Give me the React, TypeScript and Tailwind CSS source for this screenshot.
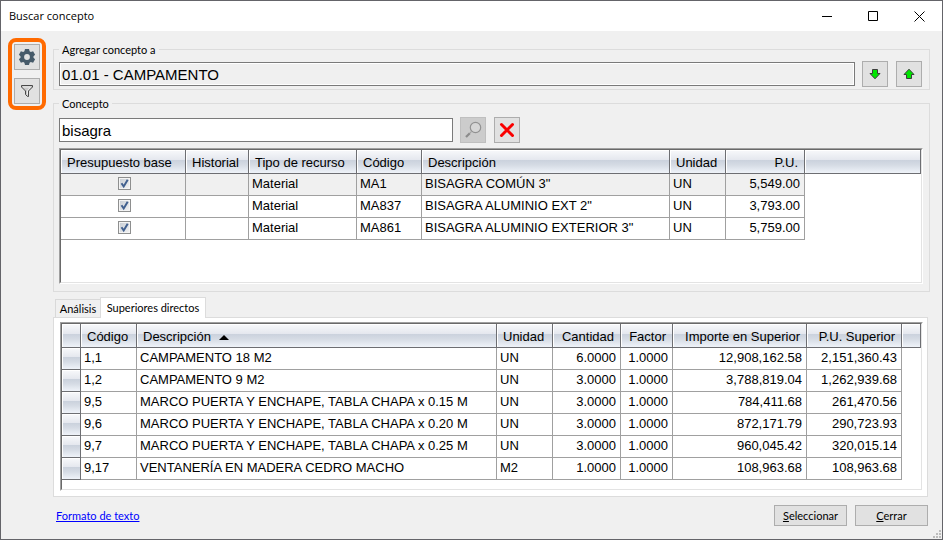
import { useState } from "react";
import type { ReactNode } from "react";
import clsx from "clsx";

type Column = {
  label: string;
  width: string;
  numeric?: boolean;
  sorted?: boolean;
};

const resourceColumns: Column[] = [
  { label: "Presupuesto base", width: "w-[125px]" },
  { label: "Historial", width: "w-[63px]" },
  { label: "Tipo de recurso", width: "w-[108px]" },
  { label: "Código", width: "w-[65px]" },
  { label: "Descripción", width: "w-[248px]" },
  { label: "Unidad", width: "w-[56px]" },
  { label: "P.U.", width: "w-[79px]", numeric: true },
];

const resources = [
  { type: "Material", code: "MA1", name: 'BISAGRA COMÚN 3"', unit: "UN", price: "5,549.00" },
  { type: "Material", code: "MA837", name: 'BISAGRA ALUMINIO EXT 2"', unit: "UN", price: "3,793.00" },
  { type: "Material", code: "MA861", name: 'BISAGRA ALUMINIO EXTERIOR 3"', unit: "UN", price: "5,759.00" },
];

const parentColumns: Column[] = [
  { label: "", width: "w-[19px]" },
  { label: "Código", width: "w-[56px]" },
  { label: "Descripción", width: "w-[360px]", sorted: true },
  { label: "Unidad", width: "w-[56px]" },
  { label: "Cantidad", width: "w-[68px]", numeric: true },
  { label: "Factor", width: "w-[52px]", numeric: true },
  { label: "Importe en Superior", width: "w-[134px]", numeric: true },
  { label: "P.U. Superior", width: "w-[95px]", numeric: true },
];

const parents = [
  ["1,1", "CAMPAMENTO 18 M2", "UN", "6.0000", "1.0000", "12,908,162.58", "2,151,360.43"],
  ["1,2", "CAMPAMENTO 9 M2", "UN", "3.0000", "1.0000", "3,788,819.04", "1,262,939.68"],
  ["9,5", "MARCO PUERTA Y ENCHAPE, TABLA CHAPA x 0.15 M", "UN", "3.0000", "1.0000", "784,411.68", "261,470.56"],
  ["9,6", "MARCO PUERTA Y ENCHAPE, TABLA CHAPA x 0.20 M", "UN", "3.0000", "1.0000", "872,171.79", "290,723.93"],
  ["9,7", "MARCO PUERTA Y ENCHAPE, TABLA CHAPA x 0.25 M", "UN", "3.0000", "1.0000", "960,045.42", "320,015.14"],
  ["9,17", "VENTANERÍA EN MADERA CEDRO MACHO", "M2", "1.0000", "1.0000", "108,963.68", "108,963.68"],
];

const headerFill =
  "bg-[linear-gradient(to_bottom,#f8f9fb_0%,#e4e7ee_44%,#cbd2dd_45%,#d5dbe4_65%,#eff3f9_100%)]";

function ToolButton({
  label,
  disabled,
  children,
}: {
  label: string;
  disabled?: boolean;
  children: ReactNode;
}) {
  return (
    <button
      type="button"
      aria-label={label}
      disabled={disabled}
      className={clsx(
        "flex size-[26px] shrink-0 items-center justify-center border",
        disabled ? "border-[#bfbfbf] bg-[#cccccc]" : "border-[#adadad] bg-[#e1e1e1]"
      )}
    >
      {children}
    </button>
  );
}

function GearIcon() {
  return (
    <svg width="18" height="18" viewBox="0 0 18 18" fill="#465a69">
      <path
        fillRule="evenodd"
        d="M7 1h4l.6 2.200 1.200.7 2.300-.6 2 3.400-1.600 1.600v1.400l1.600 1.600-2 3.400-2.300-.6-1.200.7L11 17H7l-.6-2.200-1.200-.7-2.300.6-2-3.400 1.600-1.600V8.300L.9 6.700l2-3.400 2.300.6 1.200-.7zM9 6.100a2.900 2.900 0 1 0 0 5.800 2.900 2.900 0 0 0 0-5.800z"
      />
    </svg>
  );
}

function FunnelIcon() {
  return (
    <svg width="14" height="14" viewBox="0 0 14 14" fill="#c8c8c8" stroke="#484848" strokeWidth="1">
      <path d="M1.500 1.500h11v1.500l-4 4v5.500h-1l-2-2v-3.500l-4-4z" />
      <path d="M3 3h7.500L7.500 6.500v4" fill="none" stroke="#eeeeee" />
    </svg>
  );
}

function ArrowIcon({ up }: { up?: boolean }) {
  return (
    <svg width="12" height="12" viewBox="0 0 12 12" fill="#00e600" stroke="#3c3c3c" strokeWidth="1">
      {up ? (
        <path d="M6 1.200 11 6.500H8.500v4h-5v-4H1z" />
      ) : (
        <path d="M6 10.800 1 5.500h2.500v-4h5v4H11z" />
      )}
    </svg>
  );
}

function SearchIcon() {
  return (
    <svg width="18" height="18" viewBox="0 0 18 18" fill="none">
      <circle cx="11.500" cy="6.500" r="5.200" fill="#d6d6d6" stroke="#929292" strokeWidth="1.200" />
      <path d="M7.800 10.200 6 12" stroke="#a5a5a5" strokeWidth="1.200" />
      <path d="M5.800 12.200 2 16" stroke="#8b8b8b" strokeWidth="2.200" />
    </svg>
  );
}

function DeleteIcon() {
  return (
    <svg width="16" height="16" viewBox="0 0 16 16" stroke="#fa0000" strokeWidth="3" strokeLinecap="round">
      <path d="M2.500 2.500 13.500 13.500M13.500 2.500 2.500 13.500" />
    </svg>
  );
}

// Sunken two-line frame around each grid
function GridFrame({ className, children }: { className: string; children: ReactNode }) {
  return (
    <div className="border border-t-[#a0a0a0] border-l-[#a0a0a0] border-r-white border-b-white">
      <div
        className={clsx(
          "overflow-hidden border border-t-[#696969] border-l-[#696969] border-r-[#e3e3e3] border-b-[#e3e3e3] bg-white",
          className
        )}
      >
        {children}
      </div>
    </div>
  );
}

function GridHead({ columns }: { columns: Column[] }) {
  return (
    <thead>
      <tr>
        {columns.map((column) => (
          <th
            key={column.label}
            scope="col"
            className={clsx(
              "h-6 border-r border-b border-[#6d6e72] px-[6px] pt-[2px] font-normal shadow-[inset_1px_1px_0_#fff]",
              headerFill,
              column.width,
              column.numeric ? "text-right" : "text-left"
            )}
          >
            {column.label}
            {column.sorted && (
              <svg width="10" height="5" viewBox="0 0 10 5" className="ml-2 inline align-middle">
                <path d="M5 0 10 5H0z" />
              </svg>
            )}
          </th>
        ))}
        <td
          className={clsx(
            "h-6 border-r border-b border-[#6d6e72] shadow-[inset_1px_1px_0_#fff]",
            headerFill
          )}
        />
      </tr>
    </thead>
  );
}

function Cell({ numeric, children }: { numeric?: boolean; children?: ReactNode }) {
  return (
    <td
      className={clsx(
        "h-[22px] border-r border-b border-[#a0a0a0] pb-[2px]",
        numeric ? "pr-1 text-right" : "pl-[3px]"
      )}
    >
      {children}
    </td>
  );
}

function CheckBox({ label }: { label: string }) {
  return (
    <span className="relative mx-auto block size-[13px]">
      <input
        type="checkbox"
        defaultChecked
        aria-label={label}
        className="peer block size-[13px] appearance-none border border-[#8e8f8f] bg-linear-to-br from-[#c6ccd4] to-[#f4f4f4] shadow-[inset_0_0_0_1px_#f4f4f4]"
      />
      <svg
        width="13"
        height="13"
        viewBox="0 0 13 13"
        fill="none"
        stroke="#41608f"
        strokeWidth="2"
        className="pointer-events-none absolute inset-0 hidden peer-checked:block"
      >
        <path d="M3.500 6.200 5.700 9.500 9.700 2.800" />
      </svg>
    </span>
  );
}

function TitleBar() {
  return (
    <header className="flex h-[30px] items-center bg-white">
      <h1 className="flex-1 pl-2 font-['Open_Sans','Noto_Sans',sans-serif] text-[11px]">
        Buscar concepto
      </h1>
      <button type="button" aria-label="Minimizar" className="flex h-full w-[46px] items-center justify-center">
        <svg width="11" height="11" stroke="#000">
          <path d="M0 5.500h10" />
        </svg>
      </button>
      <button type="button" aria-label="Maximizar" className="flex h-full w-[46px] items-center justify-center">
        <svg width="11" height="11" fill="none" stroke="#000">
          <path d="M.5 .5h9v9h-9z" />
        </svg>
      </button>
      <button type="button" aria-label="Cerrar ventana" className="flex h-full w-[46px] items-center justify-center">
        <svg width="11" height="11" stroke="#000">
          <path d="M.5 .5l10 10M10.500 .5l-10 10" />
        </svg>
      </button>
    </header>
  );
}

function TargetGroup() {
  return (
    <fieldset className="border border-[#dcdcdc] px-[5px] pt-[5px] pb-[2px]">
      <legend className="px-[3px] leading-[13px]">
        <label htmlFor="target">Agregar concepto a</label>
      </legend>
      <div className="flex items-center pr-[2px]">
        <input
          id="target"
          readOnly
          defaultValue="01.01 - CAMPAMENTO"
          className="mr-[7px] h-6 min-w-0 flex-1 border border-[#7a7a7a] bg-[#f0f0f0] px-[2px] font-['Liberation_Sans',sans-serif] text-[15px] shadow-[inset_0_0_0_1px_#fff]"
        />
        <div className="flex gap-2">
          <ToolButton label="Siguiente">
            <ArrowIcon />
          </ToolButton>
          <ToolButton label="Anterior">
            <ArrowIcon up />
          </ToolButton>
        </div>
      </div>
    </fieldset>
  );
}

function ConceptGroup() {
  const [query, setQuery] = useState("bisagra");

  return (
    <fieldset className="mt-[7px] border border-[#dcdcdc] px-[5px] pt-[7px] pb-[7px]">
      <legend className="px-[3px] leading-[13px]">
        <label htmlFor="query">Concepto</label>
      </legend>
      <div className="mb-[5px] flex items-center">
        <input
          id="query"
          value={query}
          onChange={(event) => setQuery(event.target.value)}
          className="mr-[7px] h-6 w-[394px] border border-[#7a7a7a] bg-white px-[2px] font-['Liberation_Sans',sans-serif] text-[15px]"
        />
        <div className="flex gap-2">
          <ToolButton label="Buscar" disabled>
            <SearchIcon />
          </ToolButton>
          <ToolButton label="Limpiar">
            <DeleteIcon />
          </ToolButton>
        </div>
      </div>
      <div className="pr-[1px]">
        <GridFrame className="min-h-[134px]">
          <table className="w-full table-fixed border-separate border-spacing-0 font-['Liberation_Sans',sans-serif] text-[13px] leading-4 whitespace-nowrap">
            <GridHead columns={resourceColumns} />
            <tbody>
              {resources.map((item, index) => (
                <tr key={item.code} className={index === 0 ? "*:bg-[#f0f0f0]" : ""}>
                  <Cell>
                    <CheckBox label={item.name} />
                  </Cell>
                  <Cell />
                  <Cell>{item.type}</Cell>
                  <Cell>{item.code}</Cell>
                  <Cell>{item.name}</Cell>
                  <Cell>{item.unit}</Cell>
                  <Cell numeric>{item.price}</Cell>
                </tr>
              ))}
            </tbody>
          </table>
        </GridFrame>
      </div>
    </fieldset>
  );
}

function ParentsPanel() {
  return (
    <section className="mt-[5px] mr-[2px]">
      <div role="tablist" className="flex items-end pl-[2px]">
        <button
          type="button"
          role="tab"
          aria-selected="false"
          className="h-[18px] w-[45px] border border-r-0 border-b-0 border-[#d9d9d9] bg-[#f0f0f0]"
        >
          Análisis
        </button>
        <button
          type="button"
          role="tab"
          aria-selected="true"
          className="relative -mb-px h-[21px] w-[106px] border border-b-0 border-[#dcdcdc] bg-white"
        >
          Superiores directos
        </button>
      </div>
      <div role="tabpanel" className="border border-[#dcdcdc] bg-white pt-1 pr-1 pb-[5px] pl-[6px]">
        <GridFrame className="min-h-[167px]">
          <table className="w-full table-fixed border-separate border-spacing-0 font-['Liberation_Sans',sans-serif] text-[13px] leading-4 whitespace-nowrap">
            <GridHead columns={parentColumns} />
            <tbody>
              {parents.map((row) => (
                <tr key={row[0]}>
                  <td
                    className={clsx(
                      "h-[22px] border-r border-b border-[#6d6e72] shadow-[inset_1px_1px_0_#fff]",
                      headerFill
                    )}
                  />
                  {row.map((value, index) => (
                    <Cell key={index} numeric={index > 2}>
                      {value}
                    </Cell>
                  ))}
                </tr>
              ))}
            </tbody>
          </table>
        </GridFrame>
      </div>
    </section>
  );
}

function Footer() {
  return (
    <footer className="mt-2 mr-[2px] flex items-center pl-[3px]">
      <a href="#formato" className="text-[#0000ff] underline">
        Formato de texto
      </a>
      <div className="ml-auto flex gap-2">
        <button type="button" className="h-[21px] w-[73px] border border-[#adadad] bg-[#e1e1e1]">
          <span className="underline">S</span>eleccionar
        </button>
        <button type="button" className="h-[21px] w-[73px] border border-[#adadad] bg-[#e1e1e1]">
          <span className="underline">C</span>errar
        </button>
      </div>
    </footer>
  );
}

export default function App() {
  return (
    <div className="relative flex min-h-screen flex-col border border-[#646469] bg-[#f0f0f0] font-['Lato','Liberation_Sans',sans-serif] text-[11px] leading-4 text-black">
      <TitleBar />
      <div className="flex flex-1 items-start gap-[7px] pt-[7px] pr-3 pl-[7px]">
        <aside className="flex flex-col gap-2 rounded-lg border-4 border-[#ff6a00] p-[2px]">
          <ToolButton label="Configuración">
            <GearIcon />
          </ToolButton>
          <ToolButton label="Filtro">
            <FunnelIcon />
          </ToolButton>
        </aside>
        <main className="min-w-0 flex-1 pt-[5px]">
          <TargetGroup />
          <ConceptGroup />
          <ParentsPanel />
          <Footer />
        </main>
      </div>
      <svg width="8" height="8" viewBox="0 0 8 8" fill="#bcbcbc" className="absolute right-[1px] bottom-[1px]">
        <path d="M6 0h2v2h-2zM3 3h2v2h-2zM6 3h2v2h-2zM0 6h2v2h-2zM3 6h2v2h-2zM6 6h2v2h-2z" />
      </svg>
    </div>
  );
}
